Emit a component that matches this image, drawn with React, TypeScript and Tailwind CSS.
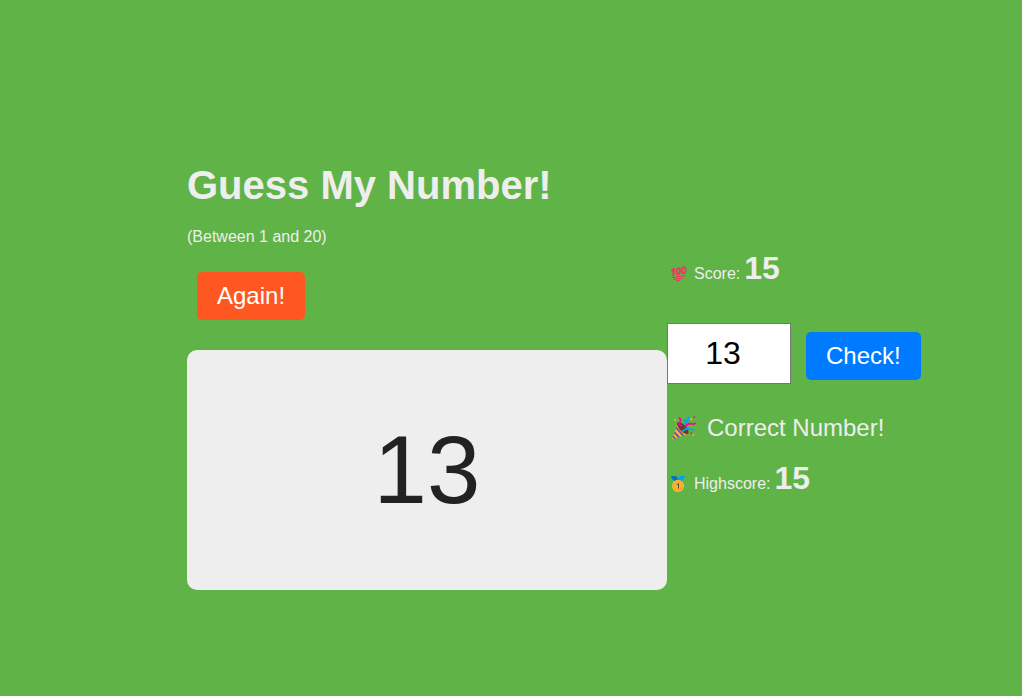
import { useState } from 'react';

function HundredIcon() {
  return (
    <svg viewBox="0 0 18 16" className="h-4 w-[18px] shrink-0" aria-hidden="true">
      <g fill="none" stroke="#f92f60" strokeLinecap="round" strokeLinejoin="round">
        <path d="M1.8 4.3 3.9 2.8 3.3 9.3" strokeWidth="1.9" />
        <ellipse cx="8.2" cy="5.2" rx="1.7" ry="3.2" strokeWidth="1.7" transform="rotate(10 8.2 5.2)" />
        <ellipse cx="13.7" cy="4.3" rx="1.8" ry="3.2" strokeWidth="1.7" transform="rotate(10 13.7 4.3)" />
        <path d="M2.6 11.7Q8.5 9.9 14.8 10M4.4 13.6Q8 12.1 12.6 12.2M6.6 14.9 9.4 14.2" strokeWidth="1.1" />
      </g>
    </svg>
  );
}

function MedalIcon() {
  return (
    <svg viewBox="0 0 16 18" className="h-[18px] w-4 shrink-0" aria-hidden="true">
      <path d="M1 1h5l4 5H5Q1.5 4.5 1 1Z" fill="#0074ba" />
      <path d="M10 1h5q-.5 3.5-4 5H6Z" fill="#00a6ed" />
      <rect x="5.2" y="5" width="5.6" height="2.2" rx="1" fill="#d3883e" />
      <circle cx="8" cy="11" r="6" fill="#f9c23c" />
      <circle cx="8" cy="11" r="4.6" fill="#ffb02e" stroke="#f59b24" strokeWidth=".8" />
      <path d="m6.8 9.8 1.7-1.2v5" fill="none" stroke="#6d4534" strokeWidth="1" />
    </svg>
  );
}

function PartyIcon() {
  return (
    <svg viewBox="0 0 26 26" className="size-[26px] shrink-0" aria-hidden="true">
      <path d="M6.2 9.2 16.5 19 2.7 24.3Q.9 24.7 1.3 22.9Z" fill="#ffb02e" />
      <path d="m5.3 11.8 7.9 8.5-2 .8-6.6-7.5ZM3.7 16.2l5.3 5.7-2 .8-4-4.5ZM2.2 20.3l2.8 3.1-1.8.7-1.7-2Z" fill="#5655c9" />
      <path d="M6.6 7.6c1.8-1.3 5.2.7 7.8 3.3s4.2 6.2 2.8 7.7-5-.3-7.6-3-4.5-6.8-3-8Z" fill="#6b3a2e" />
      <path d="M7.8 2.5C11 4.3 9.4 6.5 8.4 8.2s1.2 2.4 2.8 2.8" fill="none" stroke="#f70a8d" strokeWidth="1.8" />
      <path d="M14.2 11.8c1.5-2.4 3.7-4 6-3 1.8.9 3.5 0 4.8-.8" fill="none" stroke="#f70a8d" strokeWidth="1.8" />
      <path d="M11.2 16.7c2.2-2.7 5-3.8 7.4-2.8 1.8.7 2.7 1.3 4.6 1" fill="none" stroke="#00a6ed" strokeWidth="1.8" />
      <path d="M17.4 1.5c.5 3-1.2 5.2-3 5.5s-2.2-2-.5-2.5 3 2.4-.4 4.7" fill="none" stroke="#00a6ed" strokeWidth="1.5" />
      <g fill="#ffb02e">
        <circle cx="4.2" cy="5.3" r="1" />
        <circle cx="20.2" cy="4.2" r="1.1" />
        <circle cx="22.3" cy="19.8" r="1" />
      </g>
      <g fill="#f70a8d">
        <circle cx="23.2" cy="2.2" r=".9" />
        <circle cx="20.5" cy="18.3" r="1" />
      </g>
    </svg>
  );
}

export default function App() {
  const [guess, setGuess] = useState('13');

  return (
    <div className="min-h-screen bg-[#60b347] pt-[165px] font-['Liberation_Sans',Arial,sans-serif] text-[#eee]">
      <main className="mx-auto flex max-w-[648px] items-start">
        <section className="flex w-[480px] shrink-0 flex-col items-start">
          <h1 className="text-[40px] leading-10 font-bold">Guess My Number!</h1>
          <p className="mt-5 text-base">(Between 1 and 20)</p>
          <button
            type="button"
            onClick={() => setGuess('')}
            className="mt-[23px] ml-[10px] h-12 rounded-[5px] bg-[#ff5722] px-5 text-2xl text-white"
          >
            Again!
          </button>
          <div className="mt-[30px] flex h-60 w-full items-center justify-center rounded-[10px] bg-[#eee] text-8xl text-[#222]">
            13
          </div>
        </section>

        <section className="flex flex-col items-start pt-[85px] whitespace-nowrap">
          <p className="flex items-baseline pl-[3px] text-base leading-9">
            <span className="mr-[6px] self-center pt-1.5"><HundredIcon /></span>
            <span>Score:</span>
            <strong className="ml-1 text-[32px]">15</strong>
          </p>
          <div className="mt-[31px] flex items-center gap-[15px]">
            <input
              type="text"
              inputMode="numeric"
              aria-label="Your guess"
              value={guess}
              onChange={(event) => setGuess(event.target.value)}
              className="h-[61px] w-[124px] border border-[#767676] bg-white pr-3 text-center text-[32px] text-black"
            />
            <button type="button" className="mt-[5px] h-12 rounded-[5px] bg-[#007bff] px-5 text-2xl text-white">
              Check!
            </button>
          </div>
          <p className="mt-7 flex items-center gap-[10px] pl-1 text-2xl">
            <PartyIcon />
            Correct Number!
          </p>
          <p className="mt-4 flex items-baseline pl-[3px] text-base leading-9">
            <span className="mr-2 self-center pt-1.5"><MedalIcon /></span>
            <span>Highscore:</span>
            <strong className="ml-1 text-[32px]">15</strong>
          </p>
        </section>
      </main>
    </div>
  );
}
